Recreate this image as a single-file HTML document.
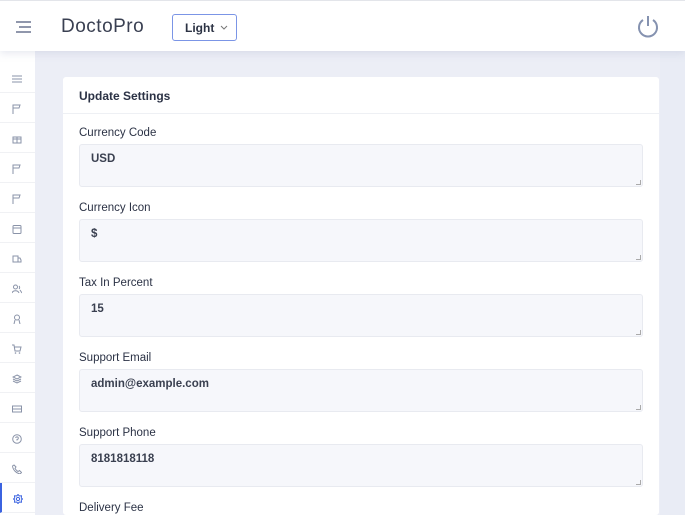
<!DOCTYPE html>
<html><head><style>
*{box-sizing:border-box;margin:0;padding:0}
html,body{width:685px;height:515px;overflow:hidden}
body{background:#eceef6;font-family:"Liberation Sans",sans-serif;position:relative}
.hdr{position:absolute;left:0;top:0;width:685px;height:51px;background:#fff;border-top:1px solid #e3e5ea;box-shadow:0 2px 8px rgba(150,160,190,.25);z-index:3}
.logo{position:absolute;left:61px;top:15px;font-size:19px;color:#3a4052;letter-spacing:.5px}
.sel{position:absolute;left:172px;top:13px;width:65px;height:27px;border:1px solid #7b95e6;border-radius:3px;font-size:12px;font-weight:bold;color:#2c3344;padding:6px 0 0 12px}
.side{position:absolute;left:0;top:51px;width:35px;height:464px;background:#fff;z-index:2}
.it{position:absolute;left:0;width:35px;height:30px;border-bottom:1px solid #f0f1f4}
.it svg{position:absolute;left:12px;top:11px}
.card{position:absolute;left:63px;top:77px;width:596px;height:438px;background:#fff;border-radius:3px;overflow:hidden}
.ch{height:37px;border-bottom:1px solid #eef0f4;font-size:12px;font-weight:bold;color:#2b3245;padding:12px 0 0 16px}
.lab{position:absolute;left:16px;font-size:11.5px;color:#2b3245}
.inp{position:absolute;left:16px;width:564px;height:43px;background:#f6f7fb;border:1px solid #e8eaf0;border-radius:3px;font-size:11.5px;font-weight:bold;color:#3a4050;padding:8px 0 0 11px}
.inp:after{content:"";position:absolute;right:1px;bottom:1px;width:4px;height:4px;border-right:1px solid #aaa;border-bottom:1px solid #aaa}
.sb{position:absolute;left:660px;top:51px;width:25px;height:464px;background:#e9ecf5}
</style></head><body>
<div class="hdr">
<svg style="position:absolute;left:16px;top:20px" width="15" height="12"><path d="M0 1H15M3 6H15M0 11H15" stroke="#6b7591" stroke-width="1.6"/></svg>
<div class="logo">DoctoPro</div>
<div class="sel">Light<svg style="position:absolute;left:47px;top:10px" width="8" height="6"><path d="M1 1L4 4L7 1" stroke="#777" fill="none"/></svg></div>
<svg style="position:absolute;left:637px;top:14px" width="22" height="24"><path d="M6 5A9 9 0 1 0 16 5" stroke="#8592b0" stroke-width="2" fill="none"/><path d="M11 1V11" stroke="#8592b0" stroke-width="2"/></svg>
</div>
<div class="sb"></div>
<div class="side">
<div class="it" style="top:12px"><svg width="10" height="10"><path d="M0 2H10M0 5H10M0 8H10" stroke="#8a93a8"/></svg></div>
<div class="it" style="top:42px"><svg width="10" height="10"><path d="M1 10V1H8L7 4H1" stroke="#8a93a8" fill="none"/></svg></div>
<div class="it" style="top:72px"><svg width="10" height="10"><rect x="1" y="3" width="8" height="6" stroke="#8a93a8" fill="none"/><path d="M5 3V9M1 5H9" stroke="#8a93a8"/></svg></div>
<div class="it" style="top:102px"><svg width="10" height="10"><path d="M1 10V1H8L7 4H1" stroke="#8a93a8" fill="none"/></svg></div>
<div class="it" style="top:132px"><svg width="10" height="10"><path d="M1 10V1H8L7 4H1" stroke="#8a93a8" fill="none"/></svg></div>
<div class="it" style="top:162px"><svg width="10" height="10"><rect x="1" y="1.5" width="8" height="8" rx="1" stroke="#8a93a8" fill="none"/><path d="M1 4H9" stroke="#8a93a8"/></svg></div>
<div class="it" style="top:192px"><svg width="10" height="10"><path d="M1 2H6V8H1ZM6 4H8L9 6V8H6" stroke="#8a93a8" fill="none"/></svg></div>
<div class="it" style="top:222px"><svg width="10" height="10"><circle cx="3.5" cy="3" r="2" stroke="#8a93a8" fill="none"/><path d="M0 9C1 6 6 6 7 9M7 2A2 2 0 0 1 7 5M8 6L10 9" stroke="#8a93a8" fill="none"/></svg></div>
<div class="it" style="top:252px"><svg width="10" height="10"><circle cx="5" cy="3.5" r="2.5" stroke="#8a93a8" fill="none"/><path d="M3 6L2 10M7 6L8 10" stroke="#8a93a8"/></svg></div>
<div class="it" style="top:282px"><svg width="10" height="10"><path d="M0 1H2L3 7H8L9 3H2.5" stroke="#8a93a8" fill="none"/><circle cx="3.5" cy="9" r=".8" fill="#8a93a8"/><circle cx="7.5" cy="9" r=".8" fill="#8a93a8"/></svg></div>
<div class="it" style="top:312px"><svg width="10" height="10"><path d="M5 1L9 3L5 5L1 3ZM1 5L5 7L9 5M1 7L5 9L9 7" stroke="#8a93a8" fill="none"/></svg></div>
<div class="it" style="top:342px"><svg width="10" height="10"><rect x="0.5" y="2" width="9" height="6" stroke="#8a93a8" fill="none"/><path d="M1 5H9" stroke="#8a93a8"/></svg></div>
<div class="it" style="top:372px"><svg width="10" height="10"><circle cx="5" cy="5" r="4.3" stroke="#8a93a8" fill="none"/><path d="M3.7 4A1.3 1.3 0 1 1 5 5.5V6.5" stroke="#8a93a8" fill="none"/></svg></div>
<div class="it" style="top:402px"><svg width="10" height="10"><path d="M2 1L4 3L3 4.5C4 6 5 7 6 7.5L7.5 6.5L9.5 8.5L8 10C4 9 1 6 0.5 2Z" stroke="#8a93a8" fill="none"/></svg></div>
<div class="it" style="top:432px;border-left:2px solid #3b63e0"><svg width="10" height="10" style="left:11px"><circle cx="5" cy="5" r="1.6" stroke="#3b63e0" fill="none"/><path d="M5 0.5L6.3 2L8.5 1.8L8.3 4L9.5 5L8.3 6L8.5 8.2L6.3 8L5 9.5L3.7 8L1.5 8.2L1.7 6L0.5 5L1.7 4L1.5 1.8L3.7 2Z" stroke="#3b63e0" fill="none"/></svg></div>
</div>
<div class="card">
<div class="ch">Update Settings</div>
<div class="lab" style="top:50px">Currency Code</div><div class="inp" style="top:67px">USD</div>
<div class="lab" style="top:125px">Currency Icon</div><div class="inp" style="top:142px">$</div>
<div class="lab" style="top:200px">Tax In Percent</div><div class="inp" style="top:217px">15</div>
<div class="lab" style="top:275px">Support Email</div><div class="inp" style="top:292px">admin@example.com</div>
<div class="lab" style="top:350px">Support Phone</div><div class="inp" style="top:367px">8181818118</div>
<div class="lab" style="top:425px">Delivery Fee</div>
</div>
</body></html>
